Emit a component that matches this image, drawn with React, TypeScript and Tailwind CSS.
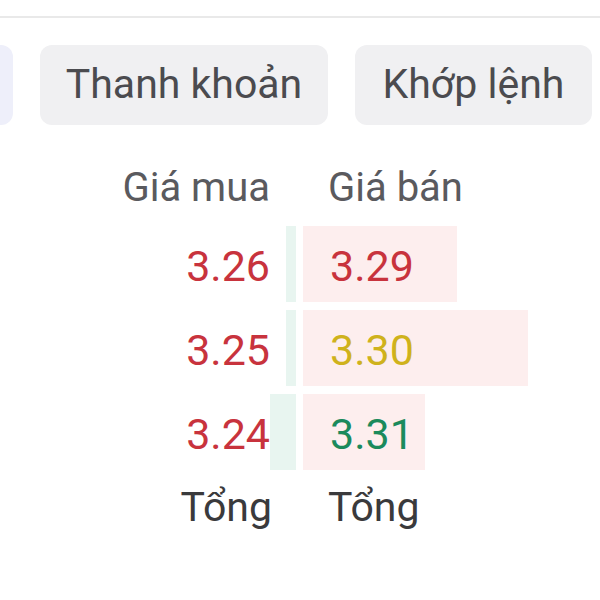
import React from "react"

type Level = {
    bid: string
    ask: string
    askColor: string
    bidBar: number
    askBar: number
}

const levels: Level[] = [
    { bid: "3.26", ask: "3.29", askColor: "text-[#c8333d]", bidBar: 10, askBar: 154 },
    { bid: "3.25", ask: "3.30", askColor: "text-[#cfb21c]", bidBar: 10, askBar: 225 },
    { bid: "3.24", ask: "3.31", askColor: "text-[#1b8a5c]", bidBar: 26, askBar: 122 },
]

export default function App() {
    return (
        <div className="w-[600px] h-[600px] bg-white overflow-hidden font-['Roboto','Liberation_Sans',sans-serif]">
            {/* top divider */}
            <div className="h-[18px] border-b-2 border-[#e9e9e9]" />

            {/* tabs */}
            <div className="mt-[27px] flex gap-[27px] ml-[-47px]">
                <div className="w-[60px] h-[80px] shrink-0 rounded-[12px] bg-[#eeeffa]" />
                <div className="w-[288px] h-[80px] shrink-0 rounded-[12px] bg-[#f0f0f2] flex items-center justify-center text-[41px] text-[#4b4b4f]">
                    Thanh khoản
                </div>
                <div className="w-[237px] h-[80px] shrink-0 rounded-[12px] bg-[#f0f0f2] flex items-center justify-center text-[41px] text-[#4b4b4f]">
                    Khớp lệnh
                </div>
            </div>

            {/* order book */}
            <div className="mt-[25px] ml-[100px] flex flex-col text-[41px]">
                <div className="flex gap-[7px] h-[76px] items-center text-[40px] text-[#5a5a5e]">
                    <div className="w-[196px] text-right pr-[26px]">Giá mua</div>
                    <div className="w-[240px] pl-[25px]">Giá bán</div>
                </div>

                <div className="flex flex-col gap-[8px] text-[43px]">
                    {levels.map((lv, i) => (
                        <div key={i} className="flex gap-[7px] h-[76px]">
                            <div className="relative w-[196px] flex items-center justify-end pr-[26px] pt-[5px]">
                                <div className="absolute right-0 top-0 bottom-0 bg-[#e8f5f0]" style={{ width: lv.bidBar }} />
                                <span className="relative text-[#c8333d]">{lv.bid}</span>
                            </div>
                            <div className="relative w-[240px] flex items-center pl-[27px] pt-[5px]">
                                <div className="absolute left-0 top-0 bottom-0 bg-[#fdeeee]" style={{ width: lv.askBar }} />
                                <span className={"relative " + lv.askColor}>{lv.ask}</span>
                            </div>
                        </div>
                    ))}
                </div>

                <div className="flex gap-[7px] h-[76px] items-center text-[#3a3a3c]">
                    <div className="w-[196px] text-right pr-[24px]">Tổng</div>
                    <div className="w-[240px] pl-[25px]">Tổng</div>
                </div>
            </div>
        </div>
    )
}
